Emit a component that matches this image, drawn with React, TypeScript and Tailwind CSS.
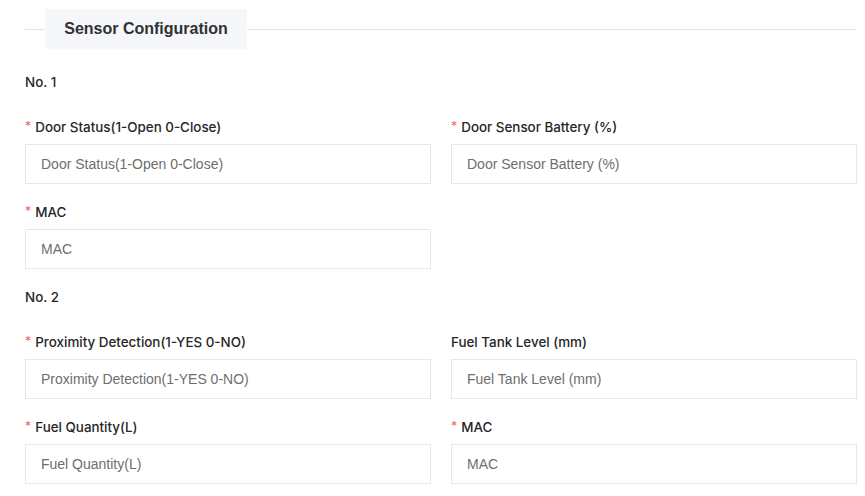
import React from 'react';

interface Field {
  label: string;
  required?: boolean;
}

const groups: { title: string; fields: (Field | null)[] }[] = [
  {
    title: 'No. 1',
    fields: [
      { label: 'Door Status(1-Open 0-Close)', required: true },
      { label: 'Door Sensor Battery (%)', required: true },
      { label: 'MAC', required: true },
      null,
    ],
  },
  {
    title: 'No. 2',
    fields: [
      { label: 'Proximity Detection(1-YES 0-NO)', required: true },
      { label: 'Fuel Tank Level (mm)' },
      { label: 'Fuel Quantity(L)', required: true },
      { label: 'MAC', required: true },
    ],
  },
];

function FormItem({ label, required }: Field) {
  return (
    <div className="flex flex-col mb-[18px]">
      <label className="h-5 flex items-center text-[13.4px] font-medium text-[#262626] leading-5 font-[Inter,sans-serif]">
        {required && <span className="text-[#f56c6c] text-[12px] mr-[4px] -mt-[2px]">*</span>}
        {label}
      </label>
      <input
        placeholder={label}
        className="mt-[7px] h-10 w-full border border-[#e4e7ed] bg-white px-[15px] text-[14px] text-[#606266] placeholder:text-[#6e6e6e] outline-none"
      />
    </div>
  );
}

export default function App() {
  return (
    <div
      className="w-[865px] h-[496px] bg-white pl-[25px] pr-[8px] overflow-hidden"
      style={{ fontFamily: '"Liberation Sans", Arial, sans-serif' }}
    >
      <div className="relative pt-[9px] flex items-center">
        <div className="absolute left-0 right-0 top-[29px] h-px bg-[#e4e4e4]" />
        <div className="relative ml-[20px] h-10 w-[202px] flex items-center justify-center bg-[#f5f7fa] text-[16px] font-bold text-[#303133]">
          Sensor Configuration
        </div>
      </div>
      {groups.map((g, gi) => (
        <div key={gi}>
          <div className={`h-5 flex items-center text-[13.4px] font-medium text-[#262626] font-[Inter,sans-serif] ${gi === 0 ? 'mt-[23px]' : ''} mb-[25px]`}>
            {g.title}
          </div>
          <div className="grid grid-cols-2 gap-x-5">
            {g.fields.map((f, fi) => (f ? <FormItem key={fi} {...f} /> : <div key={fi} />))}
          </div>
        </div>
      ))}
    </div>
  );
}
